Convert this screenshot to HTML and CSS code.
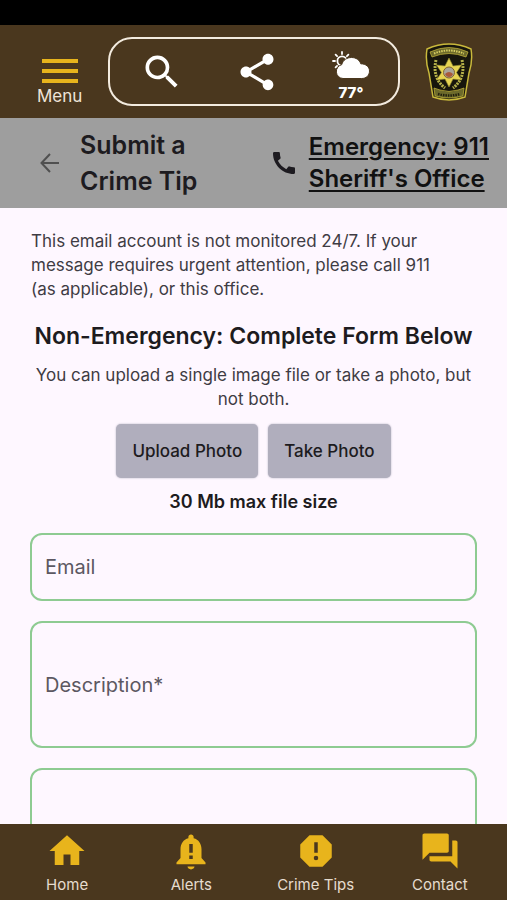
FILE: index.html
```html
<!DOCTYPE html>
<html lang="en">
<head>
<meta charset="utf-8">
<meta name="viewport" content="width=device-width, initial-scale=1">
<title>Submit a Crime Tip</title>
<link rel="stylesheet" href="styles.css">
</head>
<body>
<div class="status-bar"></div>
<header class="app-bar">
  <button class="menu" type="button">
    <svg class="menu-icon" viewBox="0 0 36 24" aria-hidden="true"><path d="M0 0h36v4H0zM0 10h36v4H0zM0 20h36v4H0z"/></svg>
    <span>Menu</span>
  </button>
  <div class="tools">
    <button class="tool" type="button" aria-label="Search">
      <svg class="tool-icon" viewBox="0 0 24 24"><path d="M15.5 14h-.79l-.28-.27A6.471 6.471 0 0 0 16 9.500 6.500 6.500 0 1 0 9.500 16c1.610 0 3.090-.59 4.230-1.570l.27.28v.79l5 4.990L20.490 19l-4.990-5zm-6 0C7.010 14 5 11.990 5 9.500S7.010 5 9.500 5 14 7.010 14 9.500 11.990 14 9.500 14z"/></svg>
    </button>
    <button class="tool" type="button" aria-label="Share">
      <svg class="tool-icon" viewBox="0 0 24 24"><path d="M18 16.080c-.76 0-1.440.3-1.960.77L8.910 12.700c.05-.23.09-.46.09-.7s-.04-.47-.09-.7l7.050-4.110c.54.5 1.250.81 2.040.81 1.660 0 3-1.340 3-3s-1.340-3-3-3-3 1.340-3 3c0 .24.04.47.09.7L8.040 9.810C7.500 9.310 6.790 9 6 9c-1.660 0-3 1.340-3 3s1.340 3 3 3c.79 0 1.500-.31 2.040-.81l7.120 4.160c-.05.21-.08.43-.08.65 0 1.610 1.310 2.920 2.920 2.920s2.920-1.310 2.920-2.920-1.310-2.920-2.920-2.920z"/></svg>
    </button>
    <button class="tool weather" type="button">
      <svg class="weather-icon" viewBox="0 0 38 28" aria-hidden="true">
        <g fill="none" stroke="#fff" stroke-width="1.800" stroke-linecap="round"><circle cx="10" cy="10" r="4.600"/><path d="M10 1v2M3.600 3.600l1.500 1.500M1 10h2M3.600 16.400l1.500-1.500M16.400 3.600l-1.500 1.500"/></g>
        <path stroke="#4a371e" stroke-width="1" d="M11 27.500a7 7 0 0 1-1.300-13.800C11 9 15 6.500 19.500 6.500c4.500 0 8 2.400 9.300 6.300 5 0 8.700 3 8.700 7.200 0 4.500-3.300 7.500-7.800 7.500z"/>
      </svg>
      <span>77°</span>
    </button>
  </div>
  <svg class="badge" viewBox="0 0 48 58" role="img" aria-label="Sheriff's Office">
    <path d="M2 6Q24-4 46 6Q48 18 44 30L40 54Q24 60 8 54L4 30Q0 18 2 6z" fill="#17160c" stroke="#c9b93c" stroke-width="1.500"/>
    <path d="M5 9Q24 0 43 9L41 14Q24 7 7 14z" fill="#6c6a2b" stroke="#c9b93c" stroke-width=".7"/>
    <path d="M9 10.500Q24 4.500 39 10.500" fill="none" stroke="#d8cf62" stroke-width="2" stroke-dasharray="1.500 1"/>
    <g fill="none" stroke="#b5b14a" stroke-width="3" stroke-dasharray="2 1"><path d="M11 17Q7 35 20 45"/><path d="M37 17Q41 35 28 45"/></g>
    <path d="M24 15l4 8 8.500-1-5 7.500 5 7.500-8.500-1-4 8-4-8-8.500 1 5-7.500-5-7.500 8.500 1z" fill="#e6d453" stroke="#99902f" stroke-width=".6"/>
    <circle cx="24" cy="29.500" r="5.500" fill="#a9a59a" stroke="#82662f"/>
    <path d="M20 31q4-4 8 0-1 3-4 3t-4-3" fill="#a95a3b"/>
    <path d="M9 45l6 2Q24 50 33 47l6-2-1 8Q24 57 10 53z" fill="#6c6a2b" stroke="#c9b93c" stroke-width=".7"/>
    <path d="M13 51Q24 54 35 51" fill="none" stroke="#211f0c" stroke-width="2.500" stroke-dasharray="1.500 1"/>
  </svg>
</header>
<div class="title-bar">
  <button class="back" type="button" aria-label="Back"><svg viewBox="0 0 20 20"><path d="M19 10H1.500M10 1L1.500 10l8.500 9" fill="none" stroke="#505050" stroke-width="2"/></svg></button>
  <h1>Submit a Crime Tip</h1>
  <svg class="phone" viewBox="3 3 18 18" aria-hidden="true"><path d="M20.010 15.380c-1.230 0-2.420-.2-3.530-.56a.977.977 0 0 0-1.010.24l-1.570 1.970c-2.830-1.350-5.480-3.900-6.890-6.830l1.950-1.660c.27-.28.35-.67.24-1.020-.37-1.110-.56-2.300-.56-3.530 0-.54-.45-.99-.99-.99H4.190C3.650 3 3 3.240 3 3.990 3 13.280 10.730 21 20.010 21c.71 0 .99-.63.99-1.180v-3.450c0-.54-.45-.99-.99-.99z"/></svg>
  <div class="calls"><a href="tel:911">Emergency: 911</a><a href="#office">Sheriff's Office</a></div>
</div>
<main>
  <p class="notice">This email account is not monitored 24/7. If your message requires urgent attention, please call 911 (as applicable), or this office.</p>
  <h2>Non-Emergency: Complete Form Below</h2>
  <p class="hint">You can upload a single image file or take a photo, but not both.</p>
  <form>
    <div class="uploads">
      <button type="button">Upload Photo</button>
      <button type="button">Take Photo</button>
    </div>
    <p class="limit">30 Mb max file size</p>
    <input class="field" type="email" placeholder="Email" aria-label="Email">
    <input class="field tall" type="text" placeholder="Description*" aria-label="Description" required>
    <textarea class="field tall" aria-label="Details"></textarea>
  </form>
</main>
<nav>
  <a href="#home"><svg viewBox="0 0 24 24"><path d="M10 20v-6h4v6h5v-8h3L12 3 2 12h3v8z"/></svg>Home</a>
  <a href="#alerts"><svg viewBox="0 0 24 24"><path fill-rule="evenodd" d="M12 22.500c1.100 0 2-.7 2-1.600h-4c0 .9.900 1.600 2 1.600zM18 16v-5c0-3.070-1.640-5.640-4.500-6.320V4c0-.83-.67-1.500-1.500-1.500s-1.500.67-1.500 1.500v.68C7.630 5.360 6 7.920 6 11v5l-2.300 2.600V19.600h16.600V18.600zM13 16.500h-2v-2h2zM13 13h-2V8h2z"/></svg>Alerts</a>
  <a href="#tips"><svg viewBox="0 0 24 24"><path fill-rule="evenodd" d="M15.730 3H8.270L3 8.270v7.460L8.270 21h7.460L21 15.730V8.270zM12 17.300a1.300 1.300 0 1 1 0-2.600 1.300 1.300 0 0 1 0 2.600zM13 13h-2V7h2z"/></svg>Crime Tips</a>
  <a href="#contact"><svg viewBox="0 0 24 24"><path d="M21 6h-2v9H6v2c0 .55.45 1 1 1h11l4 4V7c0-.55-.45-1-1-1zM17 12V3c0-.55-.45-1-1-1H3c-.55 0-1 .45-1 1v14l4-4h10c.55 0 1-.45 1-1z"/></svg>Contact</a>
</nav>
</body>
</html>
```

FILE: styles.css
```css
* { box-sizing: border-box; }

body {
  margin: 0;
  height: 100vh;
  display: flex;
  flex-direction: column;
  background: #fef7ff;
  color: #1d1b20;
  font-family: Inter, "Liberation Sans", sans-serif;
}

h1, h2, p { margin: 0; }
button { font: inherit; border: 0; background: none; padding: 0; cursor: pointer; }
a { color: inherit; }
svg { display: block; flex: none; }

.status-bar { height: 25px; background: #000; flex: none; }

.app-bar {
  flex: none;
  display: flex;
  align-items: center;
  padding: 12px 34px 12px 37px;
  background: #4a371e;
}
.menu {
  display: flex;
  flex-direction: column;
  align-items: center;
  gap: 3px;
  padding-top: 22px;
  color: #eee4d8;
  font-size: 17px;
  line-height: 20px;
}
.menu-icon { width: 36px; height: 24px; fill: #e8b41c; }
.tools {
  flex: 1;
  display: flex;
  align-items: center;
  height: 69px;
  margin: 0 25px 0 26px;
  padding-left: 5px;
  border: 2px solid #f3ebdf;
  border-radius: 24px;
}
.tool { flex: 1; display: flex; flex-direction: column; align-items: center; }
.tool-icon { width: 44px; height: 44px; fill: #fff; }
.weather-icon { width: 38px; height: 28px; fill: #fff; }
.weather { gap: 4px; padding-top: 10px; color: #fff; font-size: 15px; line-height: 20px; font-weight: 800; }
.badge { width: 48px; height: 58px; }

.title-bar {
  flex: none;
  display: flex;
  align-items: center;
  height: 90px;
  padding: 0 18px 0 40px;
  background: #9e9e9e;
}
.back svg { width: 20px; height: 20px; }
h1 { flex: 1; margin: 0 20px; max-width: 140px; font-size: 25px; line-height: 36px; font-weight: 600; }
.phone { width: 22px; height: 22px; margin: 0 14px 0 auto; fill: #1d1b20; }
.calls { display: flex; flex-direction: column; color: #111; font-size: 24px; line-height: 32px; font-weight: 600; white-space: nowrap; text-underline-offset: 3px; }

main { flex: 1; min-height: 0; overflow-y: auto; scrollbar-width: none; padding: 21px 28px; }
.notice, .hint { font-size: 17px; line-height: 24px; color: #3f3c44; }
.notice { padding: 0 28px 0 3px; }
h2 { margin: 21px 0 13px; font-size: 23px; line-height: 28px; font-weight: 600; text-align: center; }
.hint { text-align: center; }
form { display: flex; flex-direction: column; gap: 20px; padding: 0 2px; }
.uploads { display: flex; justify-content: center; gap: 10px; margin-top: 13px; }
.uploads button {
  height: 54px;
  padding: 0 16px;
  border-radius: 5px;
  background: #b0aebd;
  box-shadow: 0 0 2px #b0aebd;
  color: #1d1b20;
  font-size: 17px;
  font-weight: 500;
}
.limit { margin: -8px 0 -1px; font-size: 18px; line-height: 24px; font-weight: 600; text-align: center; }
.field {
  width: 100%;
  height: 68px;
  flex: none;
  padding: 0 13px;
  border: 2px solid #8ecb92;
  border-radius: 12px;
  background: transparent;
  color: #1d1b20;
  font: inherit;
  font-size: 20px;
  resize: none;
}
.field::placeholder { color: #5c5862; opacity: 1; }
.tall { height: 127px; }

nav { flex: none; display: flex; height: 76px; padding: 6px 5px 0; background: #4a371e; }
nav a {
  flex: 1;
  display: flex;
  flex-direction: column;
  align-items: center;
  gap: 3px;
  color: #e6dccf;
  font-size: 15px;
  line-height: 20px;
  text-decoration: none;
}
nav svg { width: 42px; height: 42px; fill: #e8b41c; }
```
